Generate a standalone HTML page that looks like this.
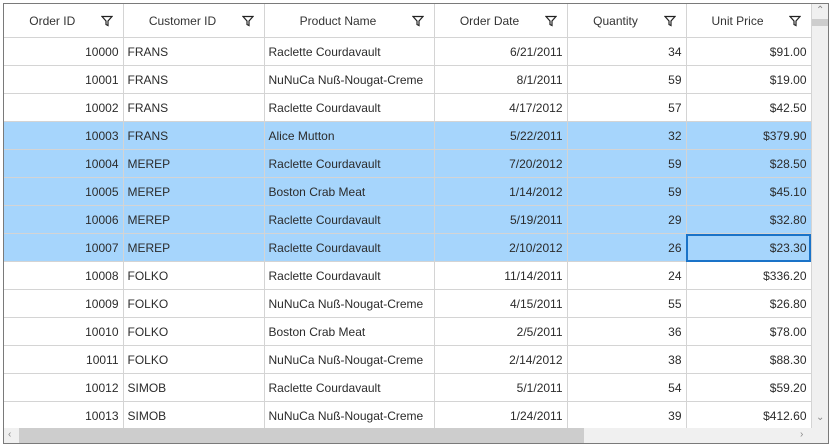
<!DOCTYPE html>
<html><head><style>
body{margin:0;width:830px;height:447px;background:#fff;font-family:"Liberation Sans",sans-serif;font-size:12px;color:#2b2b2b;overflow:hidden;position:relative}
.frame{position:absolute;left:3px;top:3px;width:824px;height:439px;border:1px solid #7a7a7a;overflow:hidden}
table{position:absolute;left:0;top:0;border-collapse:collapse;table-layout:fixed}
td,th{height:27px;border-right:1px solid #d4d4d4;border-bottom:1px solid #d4d4d4;padding:0 4px;white-space:nowrap;overflow:hidden;font-weight:normal}
th{height:33px;color:#333;text-align:center;position:relative;padding:0 26px 0 4px}
th svg{position:absolute;right:10px;top:11px}
td.r{text-align:right}
tr.s td{background:#a6d5fc}
td.cur{outline:2px solid #1a73c8;outline-offset:-2px;background:#fff}
.vs{position:absolute;left:808px;top:0;width:16px;height:424px;background:#f0f0f0}
.hs{position:absolute;left:0;top:424px;width:808px;height:15px;background:#f0f0f0}
.corner{position:absolute;left:808px;top:424px;width:16px;height:15px;background:#f0f0f0}
.ar{position:absolute;color:#888;font-size:10px}
</style></head><body>
<div class="frame">
<table>
<colgroup><col style="width:119px"><col style="width:141px"><col style="width:170px"><col style="width:133px"><col style="width:119px"><col style="width:125px"></colgroup>
<tr><th>Order ID<svg width="12" height="12" viewBox="0 0 12 12"><path d="M1 1.5H11L7 6V10.5L5 9.5V6Z" fill="none" stroke="#222" stroke-width="1.2"/></svg></th>
<th>Customer ID<svg width="12" height="12" viewBox="0 0 12 12"><path d="M1 1.5H11L7 6V10.5L5 9.5V6Z" fill="none" stroke="#222" stroke-width="1.2"/></svg></th>
<th>Product Name<svg width="12" height="12" viewBox="0 0 12 12"><path d="M1 1.5H11L7 6V10.5L5 9.5V6Z" fill="none" stroke="#222" stroke-width="1.2"/></svg></th>
<th>Order Date<svg width="12" height="12" viewBox="0 0 12 12"><path d="M1 1.5H11L7 6V10.5L5 9.5V6Z" fill="none" stroke="#222" stroke-width="1.2"/></svg></th>
<th>Quantity<svg width="12" height="12" viewBox="0 0 12 12"><path d="M1 1.5H11L7 6V10.5L5 9.5V6Z" fill="none" stroke="#222" stroke-width="1.2"/></svg></th>
<th>Unit Price<svg width="12" height="12" viewBox="0 0 12 12"><path d="M1 1.5H11L7 6V10.5L5 9.5V6Z" fill="none" stroke="#222" stroke-width="1.2"/></svg></th></tr>
<tr><td class="r">10000</td><td>FRANS</td><td>Raclette Courdavault</td><td class="r">6/21/2011</td><td class="r">34</td><td class="r">$91.00</td></tr>
<tr><td class="r">10001</td><td>FRANS</td><td>NuNuCa Nuß-Nougat-Creme</td><td class="r">8/1/2011</td><td class="r">59</td><td class="r">$19.00</td></tr>
<tr><td class="r">10002</td><td>FRANS</td><td>Raclette Courdavault</td><td class="r">4/17/2012</td><td class="r">57</td><td class="r">$42.50</td></tr>
<tr class="s"><td class="r">10003</td><td>FRANS</td><td>Alice Mutton</td><td class="r">5/22/2011</td><td class="r">32</td><td class="r">$379.90</td></tr>
<tr class="s"><td class="r">10004</td><td>MEREP</td><td>Raclette Courdavault</td><td class="r">7/20/2012</td><td class="r">59</td><td class="r">$28.50</td></tr>
<tr class="s"><td class="r">10005</td><td>MEREP</td><td>Boston Crab Meat</td><td class="r">1/14/2012</td><td class="r">59</td><td class="r">$45.10</td></tr>
<tr class="s"><td class="r">10006</td><td>MEREP</td><td>Raclette Courdavault</td><td class="r">5/19/2011</td><td class="r">29</td><td class="r">$32.80</td></tr>
<tr class="s"><td class="r">10007</td><td>MEREP</td><td>Raclette Courdavault</td><td class="r">2/10/2012</td><td class="r">26</td><td class="r cur">$23.30</td></tr>
<tr><td class="r">10008</td><td>FOLKO</td><td>Raclette Courdavault</td><td class="r">11/14/2011</td><td class="r">24</td><td class="r">$336.20</td></tr>
<tr><td class="r">10009</td><td>FOLKO</td><td>NuNuCa Nuß-Nougat-Creme</td><td class="r">4/15/2011</td><td class="r">55</td><td class="r">$26.80</td></tr>
<tr><td class="r">10010</td><td>FOLKO</td><td>Boston Crab Meat</td><td class="r">2/5/2011</td><td class="r">36</td><td class="r">$78.00</td></tr>
<tr><td class="r">10011</td><td>FOLKO</td><td>NuNuCa Nuß-Nougat-Creme</td><td class="r">2/14/2012</td><td class="r">38</td><td class="r">$88.30</td></tr>
<tr><td class="r">10012</td><td>SIMOB</td><td>Raclette Courdavault</td><td class="r">5/1/2011</td><td class="r">54</td><td class="r">$59.20</td></tr>
<tr><td class="r">10013</td><td>SIMOB</td><td>NuNuCa Nuß-Nougat-Creme</td><td class="r">1/24/2011</td><td class="r">39</td><td class="r">$412.60</td></tr>
</table>
<div class="vs"><div style="position:absolute;left:0;top:15px;width:16px;height:7px;background:#cdcdcd"></div><span class="ar" style="left:4px;top:1px">&#8963;</span><span class="ar" style="left:4px;top:408px">&#8964;</span></div>
<div class="hs"><div style="position:absolute;left:15px;top:0;width:565px;height:15px;background:#cdcdcd"></div><span class="ar" style="left:4px;top:1px">&lsaquo;</span><span class="ar" style="left:796px;top:1px">&rsaquo;</span></div>
<div class="corner"></div>
</div>
</body></html>
